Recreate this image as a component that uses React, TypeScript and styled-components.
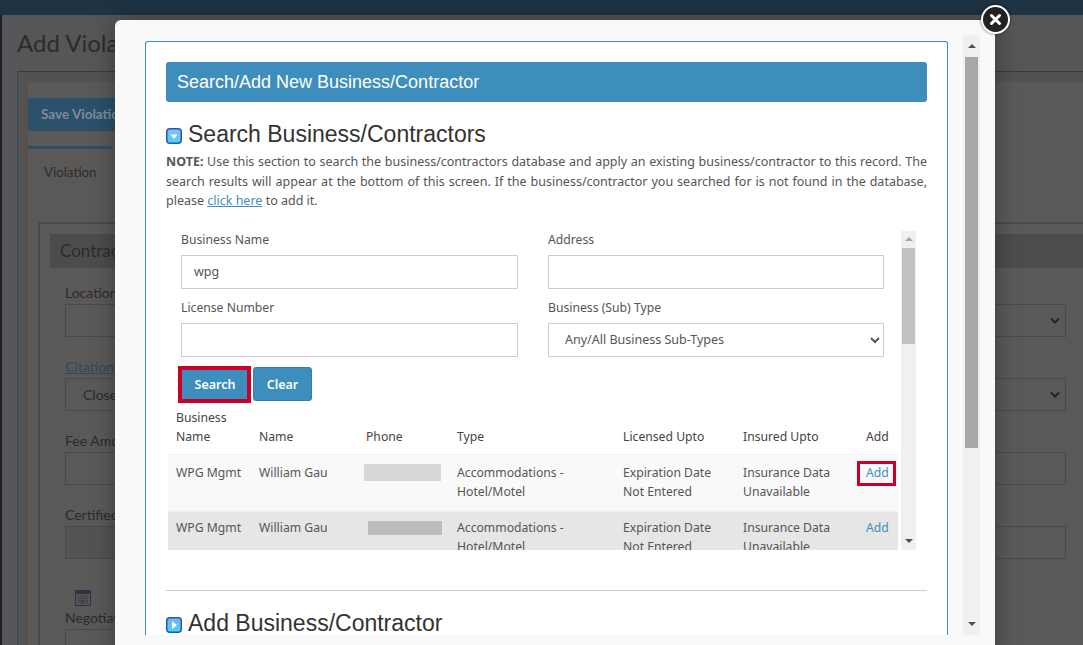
import React from 'react';
import styled, { createGlobalStyle } from 'styled-components';

const GlobalStyle = createGlobalStyle`
  html, body {
    margin: 0;
    height: 100%;
    overflow: hidden;
  }
  * {
    box-sizing: border-box;
  }
`;

const color = {
  primary: '#3d8ebd',
  text: '#555',
  heading: '#333',
  red: '#c8002a',
  dimText: '#2d2b2a',
  dimLine: '#4a4948',
  dimBg: '#5a5958',
};

const uiFont = `"Noto Sans", "Liberation Sans", sans-serif`;
const dimFont = `Lato, "Noto Sans", sans-serif`;
const headFont = `"Liberation Sans", Arial, sans-serif`;

const Page = styled.div`
  position: relative;
  width: 1083px;
  height: 645px;
  overflow: hidden;
  background: ${color.dimBg};
  font-family: ${dimFont};
  color: ${color.dimText};
`;

const TopBar = styled.div`
  height: 15px;
  background: #1e3444;
`;

const Backdrop = styled.div`
  height: 630px;
  padding: 11px 0 0 17px;
  border-left: 2px solid #1d1d22;
  background: #565558;
`;

const PageTitle = styled.div`
  font-size: 24px;
  line-height: 34px;
  margin-left: -2px;
`;

const OuterPanel = styled.div`
  margin: 11px 0 0 -2px;
  height: 600px;
  border-top: 1px solid #2d3c4a;
  border-left: 1px solid #2d4559;
  padding: 10px 0 0 10px;
  background: #535251;
`;

const OuterContent = styled.div`
  height: 100%;
  padding-top: 16px;
  background: ${color.dimBg};
`;

const SaveButton = styled.div`
  width: 130px;
  height: 33px;
  border-radius: 3px;
  background: #2a506c;
  color: #808c95;
  font-size: 13.5px;
  font-weight: 700;
  line-height: 33px;
  padding-left: 13px;
`;

const TabStrip = styled.div`
  margin-top: 15px;
  width: 84px;
  border-top: 3px solid #2a506c;
  padding: 13px 0 0 16px;
  font-size: 13.3px;
  line-height: 20px;
`;

const InnerPanel = styled.div`
  margin: 40px 0 0 10px;
  border-top: 2px solid ${color.dimLine};
  border-left: 2px solid ${color.dimLine};
  height: 460px;
  padding: 10px 0 0 10px;
`;

const SectionBand = styled.div`
  height: 34px;
  background: #4d4c4b;
  font-size: 17px;
  line-height: 34px;
  padding-left: 10px;
`;

const FieldGrid = styled.div`
  display: grid;
  grid-template-columns: 475px 496px;
  column-gap: 30px;
  row-gap: 19px;
  padding: 14px 0 0 15px;
`;

const DimField = styled.div`
  display: flex;
  flex-direction: column;
  height: 55px;
`;

const DimLabel = styled.div<{ $link?: boolean }>`
  height: 22px;
  font-size: 14px;
  line-height: 22px;
  text-decoration: ${(p) => (p.$link ? 'underline' : 'none')};
  color: ${(p) => (p.$link ? '#2b4a63' : color.dimText)};
`;

const DimBox = styled.div<{ $filled?: boolean }>`
  height: 33px;
  border: 1px solid ${color.dimLine};
  background: ${(p) => (p.$filled ? '#545352' : 'transparent')};
  font-size: 14px;
  line-height: 31px;
  padding-left: 17px;
  display: flex;
  justify-content: space-between;
`;

const DimChevron = styled.svg`
  width: 10px;
  height: 7px;
  align-self: center;
  margin-right: 5px;
`;

const CalendarRow = styled.div`
  height: 48px;
  padding: 31px 0 0 25px;
`;

const NegotiationField = styled(DimField)`
  margin: 0 0 0 15px;
  width: 475px;
`;

/* modal */

const Modal = styled.div`
  position: absolute;
  left: 115px;
  top: 20px;
  width: 880px;
  height: 640px;
  background: #f9f9f9;
  border-radius: 6px 6px 0 0;
  box-shadow: 0 0 22px rgba(0, 0, 0, 0.35);
  padding: 15px 15px 0 30px;
  display: flex;
  align-items: flex-start;
  gap: 15px;
`;

const CloseButton = styled.div`
  position: absolute;
  left: 981px;
  top: 5px;
  width: 29px;
  height: 29px;
  border-radius: 50%;
  background: #222;
  border: 2px solid #fff;
  box-shadow: 0 0 3px rgba(0, 0, 0, 0.6);
  display: flex;
  align-items: center;
  justify-content: center;
`;

const ModalFrame = styled.div`
  flex: none;
  width: 803px;
  height: 594px;
  margin-top: 6px;
  background: #fff;
  border: 1px solid ${color.primary};
  border-bottom: none;
  border-radius: 3px 3px 0 0;
  padding: 20px 20px 0;
  overflow: hidden;
  font-family: ${uiFont};
  color: ${color.text};
`;

const HeaderBar = styled.div`
  height: 40px;
  background: ${color.primary};
  border-radius: 3px;
  color: #fff;
  font-family: ${headFont};
  font-size: 18px;
  line-height: 40px;
  padding-left: 11px;
`;

const SectionHead = styled.div<{ $top: number }>`
  display: flex;
  align-items: flex-end;
  gap: 6px;
  height: 30px;
  margin-top: ${(p) => p.$top}px;
  font-family: ${headFont};
  font-size: 23px;
  line-height: 30px;
  color: ${color.heading};
`;

const HeadIcon = styled.svg`
  flex: none;
  width: 16px;
  height: 16px;
  margin-bottom: 5px;
`;

const Note = styled.p`
  margin: 3px 0 0;
  font-size: 12.5px;
  line-height: 19.5px;
  text-align: justify;

  a {
    color: ${color.primary};
  }
`;

const ResultsBox = styled.div`
  margin: 20px 0 0 2px;
  width: 748px;
  height: 319px;
  display: flex;
  overflow: hidden;
`;

const ResultsMain = styled.div`
  width: 733px;
  flex: none;
`;

const FormGrid = styled.div`
  display: grid;
  grid-template-columns: 337px 336px;
  column-gap: 30px;
  row-gap: 9px;
  padding-left: 13px;
`;

const FormField = styled.label`
  display: flex;
  flex-direction: column;
  height: 59px;
`;

const FormLabel = styled.span`
  height: 24px;
  font-size: 12.2px;
  line-height: 18px;
`;

const TextInput = styled.input`
  height: 34px;
  border: 1px solid #ccc;
  padding: 0 12px;
  font-family: ${uiFont};
  font-size: 12.5px;
  color: ${color.text};
  outline: none;
`;

const SelectInput = styled.select`
  height: 34px;
  border: 1px solid #ccc;
  padding: 0 12px;
  background: #fff;
  font-family: ${uiFont};
  font-size: 12.5px;
  color: ${color.text};
`;

const ButtonRow = styled.div`
  display: flex;
  gap: 4px;
  margin: 9px 0 0 13px;
`;

const ActionButton = styled.div<{ $marked?: boolean }>`
  position: relative;
  height: 34px;
  width: ${(p) => (p.$marked ? '68px' : '59px')};
  background: ${color.primary};
  border: 1px solid #357ea8;
  border-radius: 3px;
  color: #fff;
  font-size: 12.5px;
  font-weight: 600;
  line-height: 34px;
  text-align: center;

  ${(p) =>
    p.$marked &&
    `&::after {
      content: '';
      position: absolute;
      inset: -2px -3px -3px -4px;
      border: 4px solid ${color.red};
    }`}
`;

const ResultTable = styled.table`
  table-layout: fixed;
  width: 730px;
  margin-top: 7px;
  border-collapse: collapse;
  font-size: 12.2px;
  line-height: 19px;
`;

const HeadCell = styled.th<{ $width: number }>`
  width: ${(p) => p.$width}px;
  padding: 0 8px 8px;
  font-weight: 400;
  text-align: left;
  vertical-align: bottom;
  color: #444;
`;

const Row = styled.tr<{ $shaded?: boolean }>`
  background: ${(p) => (p.$shaded ? '#e6e6e6' : '#f9f9f9')};
  border-top: 1px solid #f0f0f0;

  td {
    padding-top: ${(p) => (p.$shaded ? '6px' : '8px')};
  }
`;

const Cell = styled.td`
  padding: 8px 8px 10px;
  vertical-align: top;
`;

const Redacted = styled.div<{ $shaded?: boolean }>`
  width: ${(p) => (p.$shaded ? '74px' : '77px')};
  height: ${(p) => (p.$shaded ? '14px' : '17px')};
  margin: ${(p) => (p.$shaded ? '3px 0 0 2px' : '1px 0 0 -2px')};
  background: ${(p) => (p.$shaded ? '#bdbdbd' : '#d8d8d8')};
`;

const AddLink = styled.span<{ $marked?: boolean }>`
  position: relative;
  color: ${color.primary};

  ${(p) =>
    p.$marked &&
    `&::after {
      content: '';
      position: absolute;
      inset: -3px -7px -5px -9px;
      border: 3px solid ${color.red};
    }`}
`;

const ScrollTrack = styled.div<{ $width: number }>`
  flex: none;
  width: ${(p) => p.$width}px;
  background: #f0f0f0;
  display: flex;
  flex-direction: column;
  align-items: center;
`;

const ArrowCap = styled.div<{ $tall?: boolean }>`
  flex: none;
  height: ${(p) => (p.$tall ? '22px' : '17px')};
  width: 100%;
  display: flex;
  align-items: center;
  justify-content: center;
`;

const Arrow = styled.div<{ $down?: boolean; $light?: boolean }>`
  width: 0;
  height: 0;
  border-left: 4px solid transparent;
  border-right: 4px solid transparent;
  border-${(p) => (p.$down ? 'top' : 'bottom')}: 4px solid ${(p) => (p.$light ? '#a3a3a3' : '#505050')};
`;

const ScrollThumb = styled.div<{ $height: number; $light?: boolean }>`
  flex: none;
  width: 13px;
  height: ${(p) => p.$height}px;
  background: ${(p) => (p.$light ? '#c1c1c1' : '#a8a8a8')};
`;

const Spacer = styled.div`
  flex: 1;
`;

const Divider = styled.hr`
  margin: 40px 0 0;
  border: none;
  border-top: 1px solid #ccc;
`;

const ModalScroll = styled(ScrollTrack)`
  height: 600px;
`;

const columns: [string, number][] = [
  ['Business Name', 83],
  ['Name', 107],
  ['Phone', 91],
  ['Type', 166],
  ['Licensed Upto', 120],
  ['Insured Upto', 123],
  ['Add', 40],
];

const StatusIcon = ({ down }: { down?: boolean }) => {
  const id = down ? 'iconFillDown' : 'iconFillRight';
  return (
    <HeadIcon viewBox="0 0 16 16">
      <defs>
        <linearGradient id={id} x1="0" y1="0" x2="0" y2="1">
          <stop offset="0" stopColor={down ? '#8fb8ec' : '#7fb0ea'} />
          <stop offset="1" stopColor="#4fd0f4" />
        </linearGradient>
      </defs>
      <rect x="0.75" y="0.75" width="14.5" height="14.5" rx="3" fill={`url(#${id})`} stroke="#1c5fb0" strokeWidth="1.5" />
      {down ? <path d="M4.5 6.5h7L8 11z" fill="#fff" /> : <path d="M6 4v8l5-4z" fill="#fff" />}
    </HeadIcon>
  );
};

const Chevron = () => (
  <DimChevron viewBox="0 0 10 7">
    <path d="M1 1.5l4 4 4-4" fill="none" stroke="#232323" strokeWidth="2" />
  </DimChevron>
);

const CalendarIcon = () => (
  <svg width="16" height="16" viewBox="0 0 16 16">
    <rect x="0.5" y="0.5" width="15" height="15" fill="#55565c" stroke="#2a3442" />
    <rect x="1" y="1" width="14" height="3" fill="#2a3442" />
    <path d="M3.5 6h9v7h-9zM3.5 8.3h9M3.5 10.6h9M6.5 6v7M9.5 6v7" fill="none" stroke="#3f3f44" strokeWidth="0.7" />
    <rect x="6.5" y="10.5" width="2" height="2" fill="#6c2626" />
  </svg>
);

const App = () => {
  return (
    <>
      <GlobalStyle />
      <Page>
        <TopBar />
        <Backdrop>
          <PageTitle>Add Violation</PageTitle>
          <OuterPanel>
            <OuterContent>
              <SaveButton>Save Violation</SaveButton>
              <TabStrip>Violation</TabStrip>
              <InnerPanel>
                <SectionBand>Contractor</SectionBand>
                <FieldGrid>
                  <DimField>
                    <DimLabel>Location</DimLabel>
                    <DimBox />
                  </DimField>
                  <DimField>
                    <DimLabel />
                    <DimBox>
                      <span />
                      <Chevron />
                    </DimBox>
                  </DimField>
                  <DimField>
                    <DimLabel $link>Citation Status</DimLabel>
                    <DimBox>Closed</DimBox>
                  </DimField>
                  <DimField>
                    <DimLabel />
                    <DimBox>
                      <span />
                      <Chevron />
                    </DimBox>
                  </DimField>
                  <DimField>
                    <DimLabel>Fee Amount</DimLabel>
                    <DimBox />
                  </DimField>
                  <DimField>
                    <DimLabel />
                    <DimBox />
                  </DimField>
                  <DimField>
                    <DimLabel>Certified</DimLabel>
                    <DimBox $filled />
                  </DimField>
                  <DimField>
                    <DimLabel />
                    <DimBox />
                  </DimField>
                </FieldGrid>
                <CalendarRow>
                  <CalendarIcon />
                </CalendarRow>
                <NegotiationField>
                  <DimLabel>Negotiation</DimLabel>
                  <DimBox />
                </NegotiationField>
              </InnerPanel>
            </OuterContent>
          </OuterPanel>
        </Backdrop>

        <Modal>
          <ModalFrame>
            <HeaderBar>Search/Add New Business/Contractor</HeaderBar>
            <SectionHead $top={17}>
              <StatusIcon down />
              Search Business/Contractors
            </SectionHead>
            <Note>
              <strong>NOTE:</strong> Use this section to search the business/contractors database and apply an existing
              business/contractor to this record. The search results will appear at the bottom of this screen. If the
              business/contractor you searched for is not found in the database, please <a href="#here">click here</a>{' '}
              to add it.
            </Note>
            <ResultsBox>
              <ResultsMain>
                <FormGrid>
                  <FormField>
                    <FormLabel>Business Name</FormLabel>
                    <TextInput readOnly defaultValue="wpg" />
                  </FormField>
                  <FormField>
                    <FormLabel>Address</FormLabel>
                    <TextInput readOnly />
                  </FormField>
                  <FormField>
                    <FormLabel>License Number</FormLabel>
                    <TextInput readOnly />
                  </FormField>
                  <FormField>
                    <FormLabel>Business (Sub) Type</FormLabel>
                    <SelectInput defaultValue="any">
                      <option value="any">Any/All Business Sub-Types</option>
                    </SelectInput>
                  </FormField>
                </FormGrid>
                <ButtonRow>
                  <ActionButton $marked>Search</ActionButton>
                  <ActionButton>Clear</ActionButton>
                </ButtonRow>
                <ResultTable>
                  <thead>
                    <tr>
                      {columns.map(([label, width]) => (
                        <HeadCell key={label} $width={width}>
                          {label}
                        </HeadCell>
                      ))}
                    </tr>
                  </thead>
                  <tbody>
                    <Row>
                      <Cell>WPG Mgmt</Cell>
                      <Cell>William Gau</Cell>
                      <Cell>
                        <Redacted />
                      </Cell>
                      <Cell>Accommodations - Hotel/Motel</Cell>
                      <Cell>Expiration Date Not Entered</Cell>
                      <Cell>Insurance Data Unavailable</Cell>
                      <Cell>
                        <AddLink $marked>Add</AddLink>
                      </Cell>
                    </Row>
                    <Row $shaded>
                      <Cell>WPG Mgmt</Cell>
                      <Cell>William Gau</Cell>
                      <Cell>
                        <Redacted $shaded />
                      </Cell>
                      <Cell>Accommodations - Hotel/Motel</Cell>
                      <Cell>Expiration Date Not Entered</Cell>
                      <Cell>Insurance Data Unavailable</Cell>
                      <Cell>
                        <AddLink>Add</AddLink>
                      </Cell>
                    </Row>
                  </tbody>
                </ResultTable>
              </ResultsMain>
              <ScrollTrack $width={15}>
                <ArrowCap>
                  <Arrow $light />
                </ArrowCap>
                <ScrollThumb $height={96} $light />
                <Spacer />
                <ArrowCap>
                  <Arrow $down />
                </ArrowCap>
              </ScrollTrack>
            </ResultsBox>
            <Divider />
            <SectionHead $top={17}>
              <StatusIcon />
              Add Business/Contractor
            </SectionHead>
          </ModalFrame>
          <ModalScroll $width={17}>
            <ArrowCap $tall>
              <Arrow />
            </ArrowCap>
            <ScrollThumb $height={391} />
            <Spacer />
            <ArrowCap $tall>
              <Arrow $down />
            </ArrowCap>
          </ModalScroll>
        </Modal>
        <CloseButton>
          <svg width="13" height="13" viewBox="0 0 13 13">
            <path d="M2.5 2.5l8 8M10.5 2.5l-8 8" stroke="#fff" strokeWidth="3" strokeLinecap="round" />
          </svg>
        </CloseButton>
      </Page>
    </>
  );
};

export default App;
